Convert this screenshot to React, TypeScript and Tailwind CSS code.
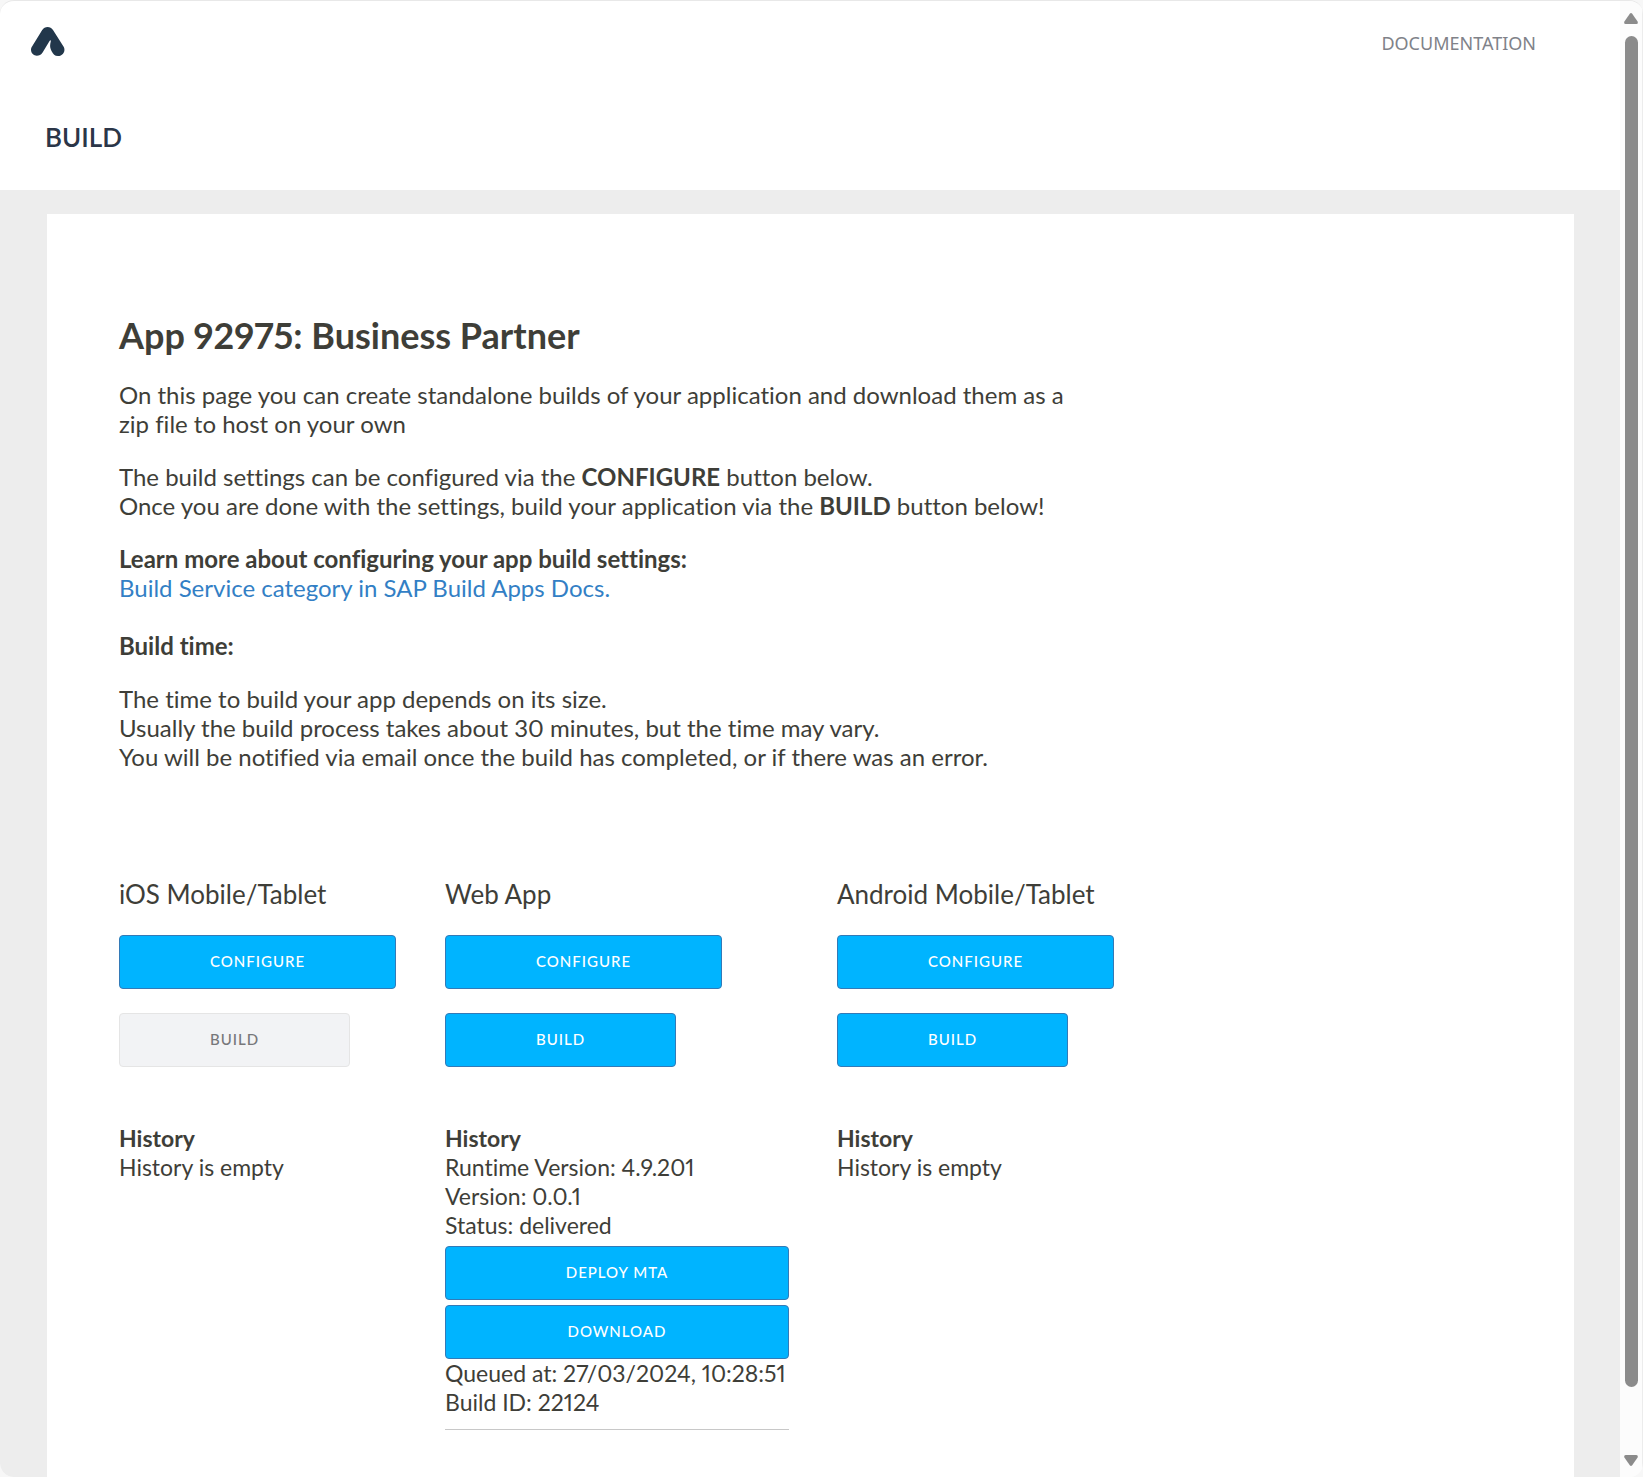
import type { ReactNode } from "react";

function Logo() {
  return (
    <svg viewBox="0 0 34 29" className="h-[29px] w-[34px]" fill="#22374b" aria-hidden="true">
      <path d="M11.2 3C13.6-.9 19.6-.9 22 3L32.8 20C34.6 23.4 32.6 29 27 29C23.6 29 22.2 27 20.8 24.4C19 21.4 18.6 19 19.8 14.2C20.1 13 19.3 12.9 18.7 13.8L11.6 25.4C8.4 30.6 0 29.4 0 22.8C0 21.4.4 20.4 1.2 19.2Z" />
    </svg>
  );
}

type ButtonProps = { children: ReactNode; wide?: boolean; disabled?: boolean };

function ActionButton({ children, wide, disabled }: ButtonProps) {
  return (
    <button
      type="button"
      disabled={disabled}
      className={
        "h-[54px] rounded border pb-0.5 text-[15px] font-medium uppercase tracking-[1px] " +
        (wide ? "w-full " : "px-[90px] ") +
        (disabled
          ? "border-[#e5e5e5] bg-[#f2f3f5] text-[#77777a]"
          : "border-[#337ab7] bg-[#00b4ff] text-white")
      }
    >
      {children}
    </button>
  );
}

type PlatformProps = { name: string; buildDisabled?: boolean; children: ReactNode };

function Platform({ name, buildDisabled, children }: PlatformProps) {
  return (
    <section>
      <h2 className="text-[26px] leading-[30px]">{name}</h2>
      <div className="mt-[26px] flex flex-col items-start gap-6">
        <ActionButton>Configure</ActionButton>
        <ActionButton disabled={buildDisabled}>Build</ActionButton>
      </div>
      <div className="mt-[57px]">
        <h3 className="font-bold">History</h3>
        {children}
      </div>
    </section>
  );
}

function Scrollbar() {
  return (
    <div className="flex w-[23px] shrink-0 flex-col items-center border-r border-[#ececec] bg-[#fcfcfc] pb-[11px] pt-3">
      <svg viewBox="0 0 14 11" className="h-[11px] w-[14px]" fill="#8b8b8b" aria-hidden="true">
        <path d="M5.8.8Q7-.6 8.2.8L13.6 8.6Q14.4 10.8 12.4 11H1.6Q-.4 10.8.4 8.6Z" />
      </svg>
      <div className="mt-3 flex w-full flex-1 flex-col items-center pb-[68px]">
        <div className="w-[13px] flex-1 rounded-full bg-[#8b8b8b]" />
      </div>
      <svg viewBox="0 0 14 11" className="h-[11px] w-[14px]" fill="#8b8b8b" aria-hidden="true">
        <path d="M5.8 10.2Q7 11.6 8.2 10.2L13.6 2.4Q14.4.2 12.4 0H1.6Q-.4.2.4 2.4Z" />
      </svg>
    </div>
  );
}

export default function App() {
  return (
    <div className="h-screen bg-[#f7f7f7] font-['Lato',sans-serif] text-[#3e3e38] proportional-nums [font-variant-ligatures:none]">
      <div className="flex h-full overflow-hidden rounded-[14px] border-t border-[#e8e8e8] bg-white">
        <div className="flex min-w-0 flex-1 flex-col overflow-hidden">
          <header className="shrink-0">
            <div className="flex items-center justify-between pl-[31px] pr-[84px] pt-[26px]">
              <a href="#" aria-label="Home">
                <Logo />
              </a>
              <nav className="flex pt-0.5">
                <a href="#" className="font-['Noto_Sans',sans-serif] text-[18px] leading-6 text-[#808289]">
                  DOCUMENTATION
                </a>
              </nav>
            </div>
            <div className="px-[45px] pb-[38px] pt-[66px]">
              <div className="text-[26px] font-semibold leading-[30px] text-[#2b3648]">BUILD</div>
            </div>
          </header>
          <div className="flex-1 bg-[#ededed] pl-[47px] pr-[46px] pt-6">
            <main className="min-h-full bg-white px-[72px] pb-20 pt-[101px] text-2xl leading-[29px]">
              <h1 className="text-4xl font-bold leading-10">App 92975: Business Partner</h1>
              <div className="mt-[25px] max-w-[980px]">
                <p>
                  On this page you can create standalone builds of your application and download them as a
                  <br />
                  zip file to host on your own
                </p>
                <p className="mt-6">
                  The build settings can be configured via the <b>CONFIGURE</b> button below.
                  <br />
                  Once you are done with the settings, build your application via the <b>BUILD</b> button below!
                </p>
                <p className="mt-6">
                  <b>Learn more about configuring your app build settings:</b>
                  <br />
                  <a href="#" className="text-[#337fc5]">
                    Build Service category in SAP Build Apps Docs.
                  </a>
                </p>
                <p className="mt-[29px] font-bold">Build time:</p>
                <p className="mt-6">
                  The time to build your app depends on its size.
                  <br />
                  Usually the build process takes about 30 minutes, but the time may vary.
                  <br />
                  You will be notified via email once the build has completed, or if there was an error.
                </p>
              </div>
              <div className="mt-[108px] grid grid-cols-[278px_344px_auto] items-start gap-12 text-[23px] leading-[29px]">
                <Platform name="iOS Mobile/Tablet" buildDisabled>
                  <p>History is empty</p>
                </Platform>
                <Platform name="Web App">
                  <p>Runtime Version: 4.9.201</p>
                  <p>Version: 0.0.1</p>
                  <p>Status: delivered</p>
                  <div className="mt-1.5 flex flex-col gap-[5px]">
                    <ActionButton wide>Deploy MTA</ActionButton>
                    <ActionButton wide>Download</ActionButton>
                  </div>
                  <p>Queued at: 27/03/2024, 10:28:51</p>
                  <p>Build ID: 22124</p>
                  <hr className="mt-3 border-[#c8c8c8]" />
                </Platform>
                <Platform name="Android Mobile/Tablet">
                  <p>History is empty</p>
                </Platform>
              </div>
            </main>
          </div>
        </div>
        <Scrollbar />
      </div>
    </div>
  );
}
